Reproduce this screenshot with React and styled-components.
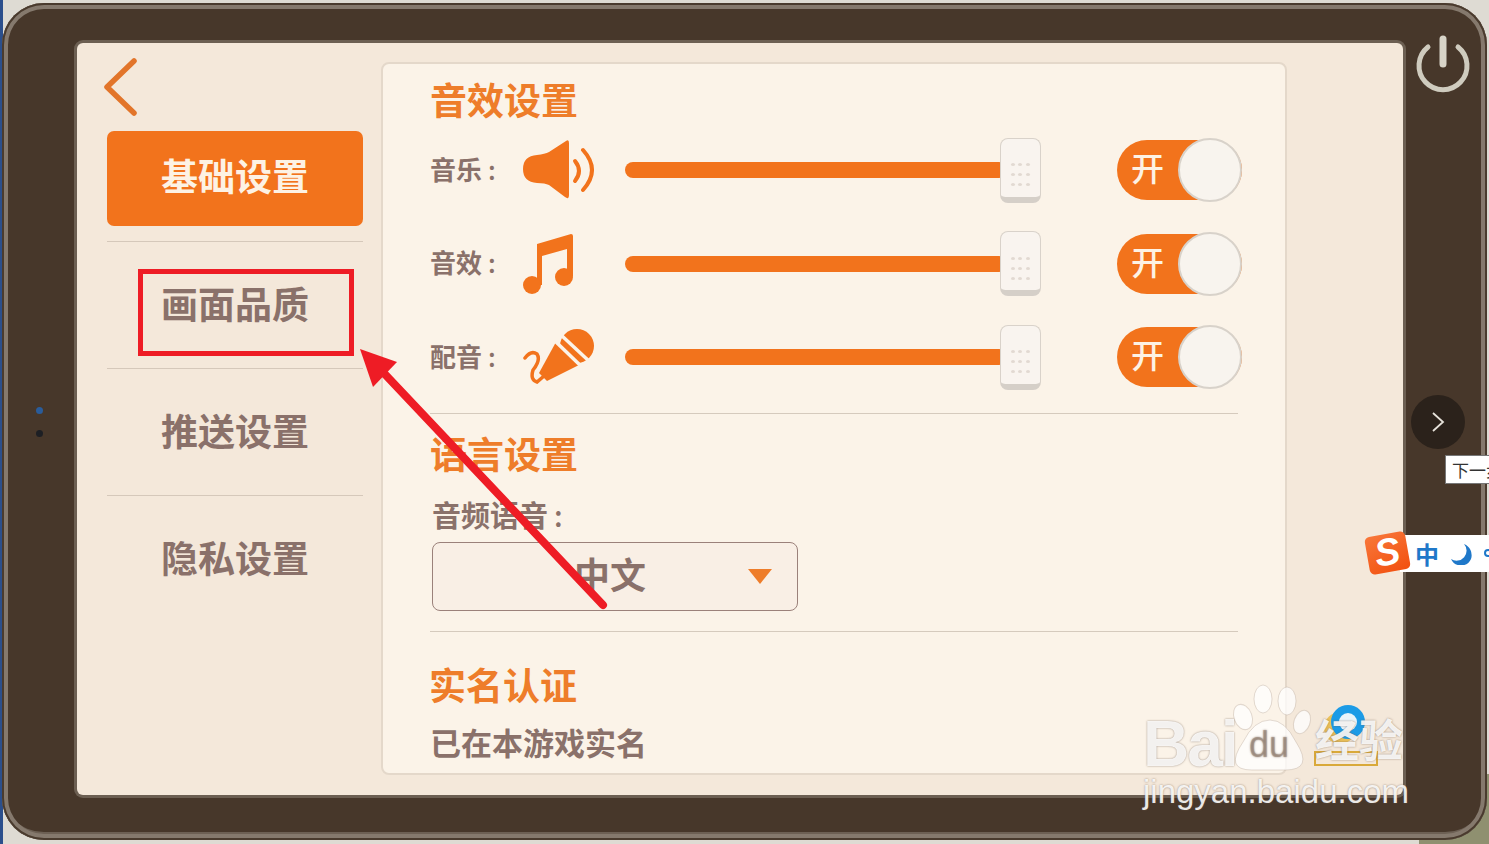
import React from "react";
import styled, { createGlobalStyle } from "styled-components";

const orange = "#f2731c";
const titleOrange = "#ee7d2a";
const muted = "#8a716a";
const cjk = `"Noto Sans CJK SC", "Noto Sans", sans-serif`;

const GlobalStyle = createGlobalStyle`
  html, body {
    margin: 0;
    padding: 0;
    background: #e9e6df;
    overflow: hidden;
  }
  * {
    box-sizing: border-box;
  }
`;

const Page = styled.div`
  position: relative;
  width: 1489px;
  height: 844px;
  overflow: hidden;
  padding: 3px 2px 4px;
  background: linear-gradient(90deg, #2b4f8c 3px, transparent 3px),
    radial-gradient(circle at 100% 100%, #8f9070 70px, transparent 70px), #dedbd3;
  font-family: ${cjk};
`;

const Bezel = styled.div`
  height: 100%;
  display: flex;
  padding: 40px 84px 45px 75px;
  background: #47372a;
  border-radius: 42px;
  box-shadow: inset 0 0 0 2px #4a3b2e, inset 0 0 0 6px #85796d, inset 0 -10px 0 -2px #6d6054;
`;

const Screen = styled.div`
  flex: 1;
  min-width: 0;
  display: flex;
  padding: 19px 116px 20px 30px;
  background: #f4e8da;
  border-radius: 6px;
  box-shadow: 0 0 0 3px #6c5f52;
`;

const Sidebar = styled.nav`
  width: 256px;
  flex: none;
  margin-right: 18px;
  display: flex;
  flex-direction: column;
`;

const BackButton = styled.div`
  height: 73px;
  margin: -4px 0 0 -5px;
  display: flex;
  align-items: flex-start;
  svg {
    display: block;
  }
`;

const ActiveTab = styled.div`
  height: 95px;
  padding-bottom: 7px;
  border-radius: 7px;
  background: ${orange};
  color: #fdf2e4;
  font-size: 37px;
  font-weight: 700;
  display: flex;
  align-items: center;
  justify-content: center;
  margin-bottom: 15px;
`;

const Tab = styled.div`
  height: 127px;
  padding-bottom: 4px;
  border-top: 1px solid #d5c8ba;
  color: ${muted};
  font-size: 37px;
  font-weight: 700;
  display: flex;
  align-items: center;
  justify-content: center;
`;

const Panel = styled.main`
  width: 906px;
  flex: none;
  padding: 10px 0 0 47px;
  background: #fbf3e8;
  border: 2px solid #e4d8ca;
  border-radius: 8px;
  overflow: hidden;
`;

const Title = styled.h2`
  margin: 0;
  height: 50px;
  font-size: 37px;
  line-height: 50px;
  font-weight: 700;
  color: ${titleOrange};
`;

const AudioRows = styled.div`
  display: flex;
  flex-direction: column;
  gap: 29px;
  margin-top: 14px;
`;

const AudioRow = styled.div`
  height: 64.5px;
  display: flex;
  align-items: center;
`;

const RowLabel = styled.span`
  width: 93px;
  padding-bottom: 4px;
  font-size: 26px;
  font-weight: 700;
  color: ${muted};
  white-space: nowrap;
`;

const Colon = styled.span`
  margin-left: 6px;
  font-weight: 500;
`;

const RowIcon = styled.div`
  width: 102px;
  display: flex;
  align-items: center;
`;

const Slider = styled.div`
  position: relative;
  width: 416px;
  height: 65px;
  display: flex;
  align-items: center;
`;

const Track = styled.div`
  width: 382px;
  height: 16px;
  border-radius: 8px;
  background: ${orange};
`;

const Handle = styled.div`
  position: absolute;
  right: 0;
  top: 0;
  width: 41px;
  height: 65px;
  padding: 21px 8px 0;
  border-radius: 8px;
  background: #f9f4ef;
  border: 1px solid #d9d2ca;
  border-bottom: 6px solid #d5cfc8;
  display: grid;
  grid-template-columns: repeat(3, 1fr);
  grid-auto-rows: 10px;
  justify-items: center;
  align-items: center;
`;

const Dot = styled.i`
  width: 4px;
  height: 3px;
  border-radius: 50%;
  background: #e2d9d2;
`;

const Toggle = styled.div`
  position: relative;
  width: 125px;
  height: 60px;
  margin-left: 76px;
  padding: 0 0 6px 14px;
  border-radius: 30px;
  background: ${orange};
  color: #fdf2e4;
  font-size: 33px;
  font-weight: 500;
  display: flex;
  align-items: center;
`;

const Knob = styled.div`
  position: absolute;
  right: 0;
  top: -2px;
  width: 64px;
  height: 64px;
  border-radius: 50%;
  background: #f8f4ee;
  border: 2px solid #d8d2ca;
`;

const Divider = styled.div`
  height: 1px;
  background: #d5cabd;
  width: 808px;
`;

const AudioDivider = styled(Divider)`
  margin-top: 23px;
`;

const LanguageTitle = styled(Title)`
  margin-top: 14px;
`;

const FieldLabel = styled.div`
  margin: 17px 0 0 2px;
  height: 39px;
  line-height: 39px;
  font-size: 29px;
  font-weight: 700;
  color: ${muted};
`;

const Select = styled.div`
  position: relative;
  width: 366px;
  height: 69px;
  margin: 8px 0 20px 2px;
  padding: 0 0 6px 141px;
  border: 1.5px solid #9b817a;
  border-radius: 8px;
  background: #f9efe5;
  color: ${muted};
  font-size: 36px;
  font-weight: 700;
  display: flex;
  align-items: center;
`;

const Caret = styled.span`
  position: absolute;
  right: 25px;
  top: 26px;
  border-style: solid;
  border-width: 15px 12px 0;
  border-color: ${titleOrange} transparent transparent;
`;

const VerifyTitle = styled(Title)`
  margin-top: 27px;
  margin-left: -1px;
`;

const VerifyText = styled.div`
  margin-top: 12px;
  font-size: 31px;
  line-height: 42px;
  font-weight: 700;
  color: ${muted};
`;

const PowerIcon = styled.svg`
  position: absolute;
  left: 1414px;
  top: 34px;
`;

const NextButton = styled.div`
  position: absolute;
  left: 1411px;
  top: 395px;
  width: 54px;
  height: 54px;
  border-radius: 50%;
  background: #2b221b;
  display: flex;
  align-items: center;
  justify-content: center;
`;

const Tooltip = styled.div`
  position: absolute;
  left: 1445px;
  top: 455px;
  width: 70px;
  height: 29px;
  padding-left: 6px;
  background: #fff;
  border: 1px solid #777;
  color: #333;
  font-size: 17px;
  line-height: 27px;
  white-space: nowrap;
`;

const ImeBar = styled.div`
  position: absolute;
  left: 1400px;
  top: 535px;
  width: 100px;
  height: 37px;
  padding-left: 15px;
  background: #fff;
  display: flex;
  align-items: center;
  gap: 11px;
  color: #1f78c9;
  font-size: 24px;
  font-weight: 700;
`;

const ImeLogo = styled.div`
  position: absolute;
  left: 1367px;
  top: 534px;
  width: 41px;
  height: 38px;
  border-radius: 5px;
  background: linear-gradient(160deg, #f8773a, #f2500f);
  transform: rotate(-10deg);
  color: #fff;
  font: italic 700 38px/36px "Liberation Sans", sans-serif;
  text-align: center;
`;

const CameraDots = styled.div`
  position: absolute;
  left: 36px;
  top: 407px;
  display: flex;
  flex-direction: column;
  gap: 16px;
`;

const CameraDot = styled.i`
  width: 7px;
  height: 7px;
  border-radius: 50%;
  background: ${(props) => props.color};
`;

const RedBox = styled.div`
  position: absolute;
  left: 138px;
  top: 269px;
  width: 216px;
  height: 87px;
  border: 5px solid #ee1c25;
`;

const Overlay = styled.svg`
  position: absolute;
  left: 0;
  top: 0;
  pointer-events: none;
`;

const WatermarkText = styled.span`
  position: absolute;
  left: ${(props) => props.x}px;
  top: ${(props) => props.y}px;
  color: ${(props) => props.color || "rgba(255,255,255,0.88)"};
  font-family: "Liberation Sans", sans-serif;
  font-size: ${(props) => props.size}px;
  font-weight: ${(props) => props.weight || 400};
  line-height: 1;
  white-space: nowrap;
  text-shadow: 0 0 2px rgba(110, 90, 75, 0.7);
`;

const BaiText = styled(WatermarkText)`
  letter-spacing: -2px;
`;

const WatermarkCjk = styled(WatermarkText)`
  font-family: ${cjk};
`;

function SpeakerIcon() {
  return (
    <svg width="72" height="60" viewBox="0 0 72 60">
      <path
        d="M43 1 Q46 -1 46 3 V55 Q46 60 42 57 L26 45 Q22 43 14 43 Q0 42 0 29 Q0 16 14 15 Q22 14 26 12 Z"
        fill={orange}
      />
      <path d="M52 21 Q60 31 52 41" fill="none" stroke={orange} strokeWidth="4" strokeLinecap="round" />
      <path d="M60 10 Q78 30 60 50" fill="none" stroke={orange} strokeWidth="4" strokeLinecap="round" />
    </svg>
  );
}

function MusicIcon() {
  return (
    <svg width="52" height="60" viewBox="0 0 52 60">
      <path d="M14 10 L48 0 Q50 0 50 2 V42 H44 V15 L19 22 V51 H14 Z" fill={orange} />
      <circle cx="9" cy="51" r="9" fill={orange} />
      <circle cx="41" cy="43" r="9" fill={orange} />
    </svg>
  );
}

function MicIcon() {
  return (
    <svg width="72" height="58" viewBox="0 0 72 58">
      <path d="M2 30 Q8 22 14 26 Q18 32 10 42 Q7 52 14 54 L21 48" fill="none" stroke={orange} strokeWidth="3.5" strokeLinecap="round" />
      <path d="M33 14 L56 37 L24 53 L16 45 Z" fill={orange} />
      <circle cx="54" cy="18" r="17" fill={orange} />
      <path d="M38 7 L67 34" stroke="#fbf3e8" strokeWidth="3.5" />
      <path d="M32 13 L60 40" stroke="#fbf3e8" strokeWidth="3.5" />
    </svg>
  );
}

const audioRows = [
  { label: "音乐", icon: <SpeakerIcon /> },
  { label: "音效", icon: <MusicIcon /> },
  { label: "配音", icon: <MicIcon /> },
];

const tabs = ["画面品质", "推送设置", "隐私设置"];

function App() {
  return (
    <Page>
      <GlobalStyle />
      <Bezel>
        <Screen>
          <Sidebar>
            <BackButton>
              <svg width="38" height="60" viewBox="0 0 38 60">
                <path d="M32 3 L5 29 L32 55" fill="none" stroke="#e2752a" strokeWidth="5.5" strokeLinecap="round" strokeLinejoin="round" />
              </svg>
            </BackButton>
            <ActiveTab>基础设置</ActiveTab>
            {tabs.map((tab) => (
              <Tab key={tab}>{tab}</Tab>
            ))}
          </Sidebar>
          <Panel>
            <Title>音效设置</Title>
            <AudioRows>
              {audioRows.map((row) => (
                <AudioRow key={row.label}>
                  <RowLabel>
                    {row.label}
                    <Colon>:</Colon>
                  </RowLabel>
                  <RowIcon>{row.icon}</RowIcon>
                  <Slider>
                    <Track />
                    <Handle>
                      {Array.from({ length: 9 }).map((_, i) => (
                        <Dot key={i} />
                      ))}
                    </Handle>
                  </Slider>
                  <Toggle>
                    开
                    <Knob />
                  </Toggle>
                </AudioRow>
              ))}
            </AudioRows>
            <AudioDivider />
            <LanguageTitle>语言设置</LanguageTitle>
            <FieldLabel>
              音频语音
              <Colon>:</Colon>
            </FieldLabel>
            <Select>
              中文
              <Caret />
            </Select>
            <Divider />
            <VerifyTitle>实名认证</VerifyTitle>
            <VerifyText>已在本游戏实名</VerifyText>
          </Panel>
        </Screen>
      </Bezel>

      <PowerIcon width="58" height="62" viewBox="0 0 58 62">
        <path d="M14 13 A24 24 0 1 0 44 13" fill="none" stroke="#cfcbbe" strokeWidth="5" strokeLinecap="round" />
        <path d="M29 5 V30" stroke="#d8d4c8" strokeWidth="7" strokeLinecap="round" />
      </PowerIcon>
      <CameraDots>
        <CameraDot color="#2a5c9a" />
        <CameraDot color="#1d1f24" />
      </CameraDots>
      <NextButton>
        <svg width="16" height="22" viewBox="0 0 16 22">
          <path d="M3 2 L13 11 L3 20" fill="none" stroke="#e6e2da" strokeWidth="1.8" />
        </svg>
      </NextButton>
      <Tooltip>下一步</Tooltip>
      <ImeBar>
        中
        <svg width="22" height="22" viewBox="0 0 22 22">
          <path d="M14 1 A10 10 0 0 1 1 16 A11 11 0 0 0 21 16 A12 12 0 0 0 14 1 Z" fill="#1f78c9" />
        </svg>
        <svg width="8" height="10" viewBox="0 0 8 10">
          <circle cx="5" cy="4" r="3" fill="none" stroke="#1f78c9" strokeWidth="2" />
        </svg>
      </ImeBar>
      <ImeLogo>S</ImeLogo>

      <Overlay width="1489" height="844" viewBox="0 0 1489 844">
        {/* watermark paw */}
        <g fill="#fff" fillOpacity="0.75" stroke="#b9a898" strokeOpacity="0.4">
          <ellipse cx="1243" cy="717" rx="9" ry="13" transform="rotate(-20 1243 717)" />
          <ellipse cx="1263" cy="699" rx="9" ry="14" />
          <ellipse cx="1287" cy="701" rx="9" ry="14" />
          <ellipse cx="1302" cy="722" rx="8" ry="12" transform="rotate(20 1302 722)" />
          <path d="M1270 720 Q1285 720 1296 742 Q1314 770 1285 770 H1252 Q1224 770 1243 742 Q1254 720 1270 720 Z" />
        </g>
        <circle cx="1340" cy="728" r="16" fill="#e9b63a" fillOpacity="0.8" />
        <circle cx="1348" cy="722" r="17" fill="#1c9be6" />
        <circle cx="1348" cy="722" r="9" fill="#eaf4fa" />
        <rect x="1315" y="752" width="62" height="13" fill="none" stroke="#d9a93a" strokeWidth="2" />
        {/* annotation arrow */}
        <path d="M603 605 L380 369" stroke="#ee1c25" strokeWidth="8" strokeLinecap="round" />
        <polygon points="360,349 397,362 373,387" fill="#ee1c25" />
      </Overlay>
      <RedBox />
      <BaiText x={1143} y={712} size={64} weight={700}>Bai</BaiText>
      <WatermarkText x={1249} y={727} size={36} color="rgba(150,130,115,0.55)">du</WatermarkText>
      <WatermarkCjk x={1315} y={716} size={44} weight={700}>经验</WatermarkCjk>
      <WatermarkText x={1143} y={775} size={33}>jingyan.baidu.com</WatermarkText>
    </Page>
  );
}

export default App;
